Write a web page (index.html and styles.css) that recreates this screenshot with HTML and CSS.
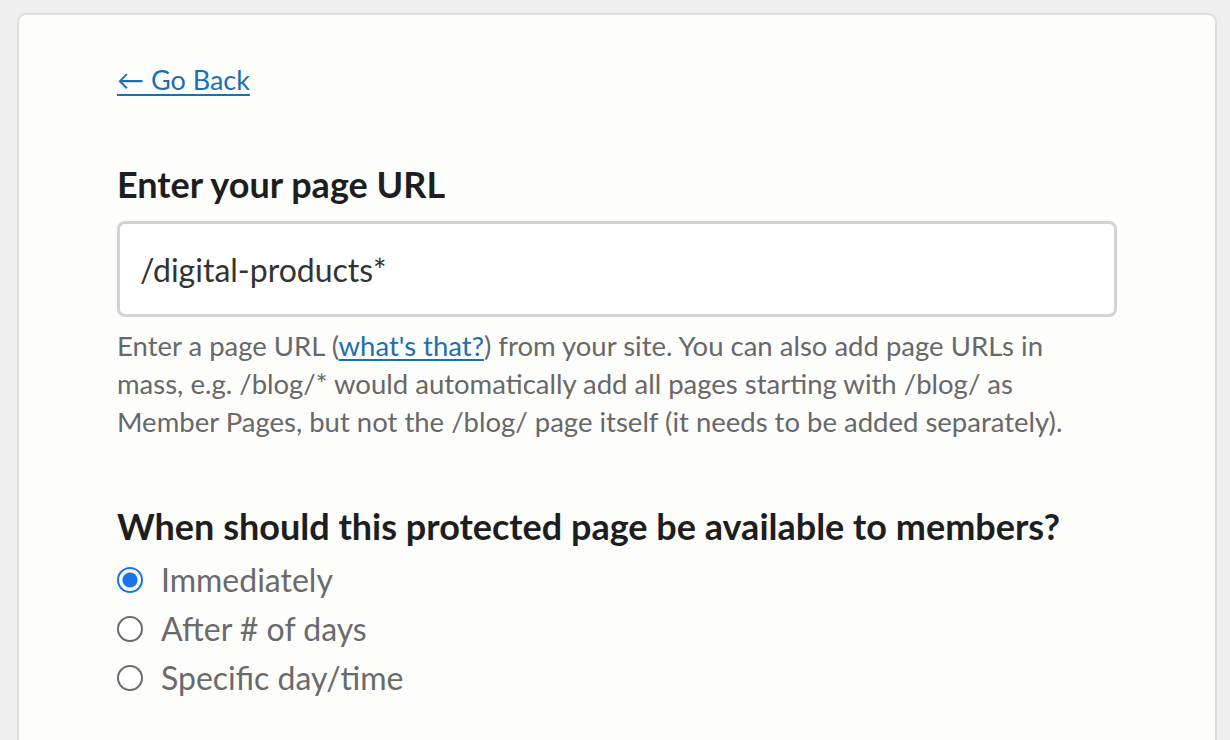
FILE: index.html
```html
<!DOCTYPE html>
<html>
<head>
<meta charset="utf-8">
<link rel="stylesheet" href="styles.css">
</head>
<body>
<div class="card">
  <a class="back" href="#">← Go Back</a>
  <h2 class="title">Enter your page URL</h2>
  <div class="input">/digital-products*</div>
  <p class="help">Enter a page URL (<a href="#">what's that?</a>) from your site. You can also add page URLs in mass, e.g. /blog/* would automatically add all pages starting with /blog/ as Member Pages, but not the /blog/ page itself (it needs to be added separately).</p>
  <h2 class="title title2">When should this protected page be available to members?</h2>
  <div class="radios">
    <label class="radio"><span class="dot checked"></span>Immediately</label>
    <label class="radio"><span class="dot"></span>After # of days</label>
    <label class="radio"><span class="dot"></span>Specific day/time</label>
  </div>
</div>
</body>
</html>
```

FILE: styles.css
```css
html, body {
  margin: 0;
  padding: 0;
  background: #efefef;
  font-family: Lato, "Liberation Sans", sans-serif;
}
body {
  padding: 13px 13px 0 17px;
  height: 740px;
  box-sizing: border-box;
  overflow: hidden;
}
.card {
  background: #fdfdfc;
  border: 2px solid #dedede;
  border-bottom: none;
  border-radius: 9px 9px 0 0;
  padding: 49px 98px 60px 98px;
  height: 760px;
  box-sizing: border-box;
}
.back {
  display: block;
  width: max-content;
  color: #1d6fb0;
  font-size: 27px;
  line-height: 32px;
  text-decoration: underline;
  text-decoration-thickness: 2px;
  text-underline-offset: 4px;
}
.title {
  margin: 66px 0 0 0;
  font-size: 36px;
  line-height: 44px;
  font-weight: 700;
  color: #1e1e1e;
}
.input {
  margin-top: 15px;
  height: 96px;
  box-sizing: border-box;
  border: 3px solid #d3d3d3;
  border-radius: 8px;
  background: #ffffff;
  padding: 0 20px;
  display: flex;
  align-items: center;
  font-size: 32px;
  color: #333333;
}
.help {
  margin: 10px 0 0 0;
  max-width: 948px;
  font-size: 27.5px;
  line-height: 38px;
  color: #686868;
}
.help a {
  color: #1d6fb0;
  text-decoration-thickness: 2px;
  text-underline-offset: 3px;
}
.title2 {
  margin-top: 63px;
}
.radios {
  display: flex;
  flex-direction: column;
  gap: 13px;
  margin-top: 14px;
}
.radio {
  display: flex;
  align-items: center;
  gap: 18px;
  font-size: 32px;
  line-height: 36px;
  color: #6a6a6a;
}
.dot {
  width: 26px;
  height: 26px;
  box-sizing: border-box;
  border-radius: 50%;
  border: 2px solid #6b6b6b;
  background: #fff;
  flex: none;
}
.dot.checked {
  border: 2.5px solid #1a73e8;
  background: radial-gradient(circle, #1a73e8 0 7px, #fff 8px);
}
```
